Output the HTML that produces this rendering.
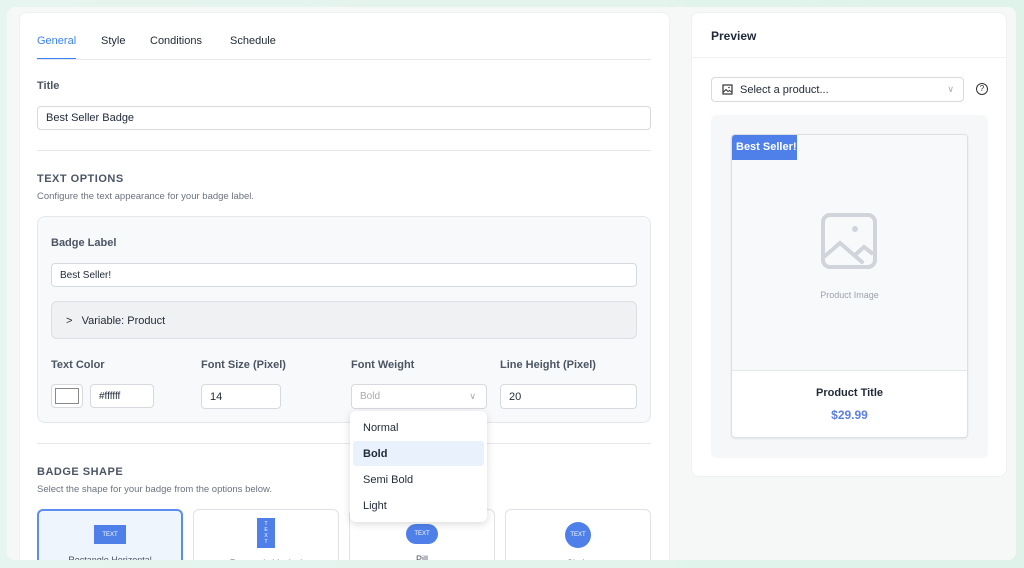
<!DOCTYPE html>
<html><head><style>
*{box-sizing:border-box;margin:0;padding:0}
body{width:1024px;height:568px;overflow:hidden;background:linear-gradient(90deg,#e6f5ef,#dff3ea);font-family:"Liberation Sans",sans-serif;color:#1f2937;position:relative}
.outer{position:absolute;left:7px;top:7px;width:1009px;height:553px;background:#f6f8f8;border-radius:8px;overflow:hidden}
.left{position:absolute;left:12px;top:5px;width:651px;height:560px;background:#fff;border-radius:8px;border:1px solid #eef0f2}
.right{position:absolute;left:684px;top:5px;width:316px;height:465px;background:#fff;border-radius:8px;border:1px solid #eef0f2}
.abs{position:absolute}
.inp{position:absolute;background:#fff;border:1px solid #d6d9de;border-radius:4px;font-size:11px;padding-left:8px;display:flex;align-items:center;color:#1f2937}
.lbl{position:absolute;font-size:11px;font-weight:bold;color:#4b5563}
.hr{position:absolute;height:1px;background:#e5e7eb}
.shape{position:absolute;top:496px;width:146px;height:70px;border:1px solid #dfe2e6;border-radius:6px;background:#fff}
.b{background:#4f80ea;color:#fff;font-size:6px;display:flex;align-items:center;justify-content:center;position:absolute}
.st{position:absolute;width:100%;text-align:center;font-size:9px;color:#4b5563;top:44px}
</style></head><body>
<div class="outer">
<div class="left">
 <div class="abs" style="left:17px;top:22px;font-size:11px;color:#3b82f6">General</div>
 <div class="abs" style="left:17px;top:45px;width:39px;height:2px;background:#3b82f6"></div>
 <div class="abs" style="left:81px;top:22px;font-size:11px">Style</div>
 <div class="abs" style="left:130px;top:22px;font-size:11px">Conditions</div>
 <div class="abs" style="left:210px;top:22px;font-size:11px">Schedule</div>
 <div class="hr" style="left:17px;top:46px;width:614px"></div>
 <div class="lbl" style="left:17px;top:67px">Title</div>
 <div class="inp" style="left:17px;top:93px;width:614px;height:24px">Best Seller Badge</div>
 <div class="hr" style="left:17px;top:137px;width:614px"></div>
 <div class="abs" style="left:17px;top:160px;font-size:11px;font-weight:bold;color:#4b5563;letter-spacing:.5px">TEXT OPTIONS</div>
 <div class="abs" style="left:17px;top:178px;font-size:9.5px;color:#6b7280">Configure the text appearance for your badge label.</div>
 <div class="abs" style="left:17px;top:203px;width:614px;height:207px;background:#f8f9fa;border:1px solid #e5e7eb;border-radius:8px">
  <div class="lbl" style="left:13px;top:20px">Badge Label</div>
  <div class="inp" style="left:13px;top:46px;width:586px;height:24px;font-size:10px">Best Seller!</div>
  <div class="abs" style="left:13px;top:84px;width:586px;height:38px;background:#f0f1f3;border:1px solid #dcdfe3;border-radius:6px;font-size:11px;padding:13px 0 0 14px">&gt;&nbsp;&nbsp;&nbsp;Variable: Product</div>
  <div class="lbl" style="left:13px;top:142px">Text Color</div>
  <div class="lbl" style="left:163px;top:142px">Font Size (Pixel)</div>
  <div class="lbl" style="left:313px;top:142px">Font Weight</div>
  <div class="lbl" style="left:462px;top:142px">Line Height (Pixel)</div>
  <div class="inp" style="left:13px;top:167px;width:32px;height:24px;padding:3px"><div style="width:100%;height:100%;border:1px solid #888;background:#fff"></div></div>
  <div class="inp" style="left:52px;top:167px;width:64px;height:24px;font-size:10px">#ffffff</div>
  <div class="inp" style="left:163px;top:167px;width:80px;height:25px">14</div>
  <div class="inp" style="left:313px;top:167px;width:136px;height:25px;color:#aaa;font-size:10px">Bold<span style="position:absolute;right:10px;font-size:9px">∨</span></div>
  <div class="inp" style="left:462px;top:167px;width:137px;height:25px">20</div>
 </div>
 <div class="hr" style="left:17px;top:430px;width:614px"></div>
 <div class="abs" style="left:17px;top:453px;font-size:11px;font-weight:bold;color:#4b5563;letter-spacing:.5px">BADGE SHAPE</div>
 <div class="abs" style="left:17px;top:471px;font-size:9.5px;color:#6b7280">Select the shape for your badge from the options below.</div>
 <div class="shape" style="left:17px;border:2px solid #5b8def;background:#eff5fd"><div class="b" style="left:55px;top:14px;width:32px;height:19px">TEXT</div><div class="st">Rectangle Horizontal</div></div>
 <div class="shape" style="left:173px"><div class="b" style="left:63px;top:8px;width:18px;height:30px;font-size:5px;line-height:6px;text-align:center">T<br>E<br>X<br>T</div><div class="st" style="top:48px">Rectangle Vertical</div></div>
 <div class="shape" style="left:329px"><div class="b" style="left:56px;top:14px;width:32px;height:20px;border-radius:10px">TEXT</div><div class="st">Pill</div></div>
 <div class="shape" style="left:485px"><div class="b" style="left:59px;top:12px;width:26px;height:26px;border-radius:50%">TEXT</div><div class="st" style="top:48px">Circle</div></div>
 <div class="abs" style="left:330px;top:398px;width:137px;height:111px;background:#fff;border-radius:6px;box-shadow:0 2px 8px rgba(0,0,0,.15);font-size:11px">
  <div class="abs" style="left:13px;top:11px">Normal</div>
  <div class="abs" style="left:3px;top:30px;width:131px;height:25px;background:#e8f1fc;border-radius:3px"></div>
  <div class="abs" style="left:13px;top:37px;font-weight:bold">Bold</div>
  <div class="abs" style="left:13px;top:63px">Semi Bold</div>
  <div class="abs" style="left:13px;top:89px">Light</div>
 </div>
</div>
<div class="right">
 <div class="abs" style="left:19px;top:16px;font-size:12px;font-weight:bold">Preview</div>
 <div class="hr" style="left:0;top:44px;width:314px;background:#f0f1f3"></div>
 <div class="inp" style="left:19px;top:64px;width:253px;height:25px;padding-left:28px">Select a product...
  <svg class="abs" style="left:10px;top:6px" width="11" height="11" viewBox="0 0 11 11"><rect x="1" y="1" width="9" height="9" fill="none" stroke="#333" stroke-width="1.2"/><path d="M1.5 8 L4 5.5 L6 7.5 L7.5 6.5 L9.5 8" fill="none" stroke="#333"/><circle cx="7" cy="3.5" r=".8" fill="#333"/></svg>
  <span style="position:absolute;right:9px;color:#aaa;font-size:9px">∨</span></div>
 <div class="abs" style="left:284px;top:70px;width:12px;height:12px;border:1.2px solid #333;border-radius:50%;font-size:8px;text-align:center;line-height:10px">?</div>
 <div class="abs" style="left:19px;top:102px;width:277px;height:343px;background:#f6f7f9;border-radius:6px">
  <div class="abs" style="left:20px;top:19px;width:237px;height:304px;background:#fff;border:1px solid #dcdfe3;border-radius:4px;overflow:hidden;box-shadow:0 1px 2px rgba(0,0,0,.08)">
   <div class="abs" style="left:0;top:0;width:235px;height:236px;background:#f8f9fa;border-bottom:1px solid #e5e7eb"></div>
   <div class="abs" style="left:0;top:0;width:65px;height:25px;background:#4f80ea;color:#fff;font-size:11px;font-weight:bold;padding:6px 0 0 4px">Best Seller!</div>
   <svg class="abs" style="left:88px;top:77px" width="58" height="58" viewBox="0 0 58 58"><rect x="3" y="3" width="52" height="52" rx="7" fill="none" stroke="#d1d5db" stroke-width="4"/><path d="M5 44 L20 31 L42 50" fill="none" stroke="#d1d5db" stroke-width="4" stroke-linecap="round"/><path d="M35 43 L44 35 L53 42" fill="none" stroke="#d1d5db" stroke-width="4"/><circle cx="35" cy="17" r="3" fill="#d1d5db"/></svg>
   <div class="abs" style="left:0;top:155px;width:235px;text-align:center;font-size:9px;color:#9ca3af">Product Image</div>
   <div class="abs" style="left:0;top:252px;width:235px;text-align:center;font-size:11px;font-weight:bold">Product Title</div>
   <div class="abs" style="left:0;top:273px;width:235px;text-align:center;font-size:12px;font-weight:bold;color:#5b7fe6">$29.99</div>
  </div>
 </div>
</div>
</div>
</body></html>
